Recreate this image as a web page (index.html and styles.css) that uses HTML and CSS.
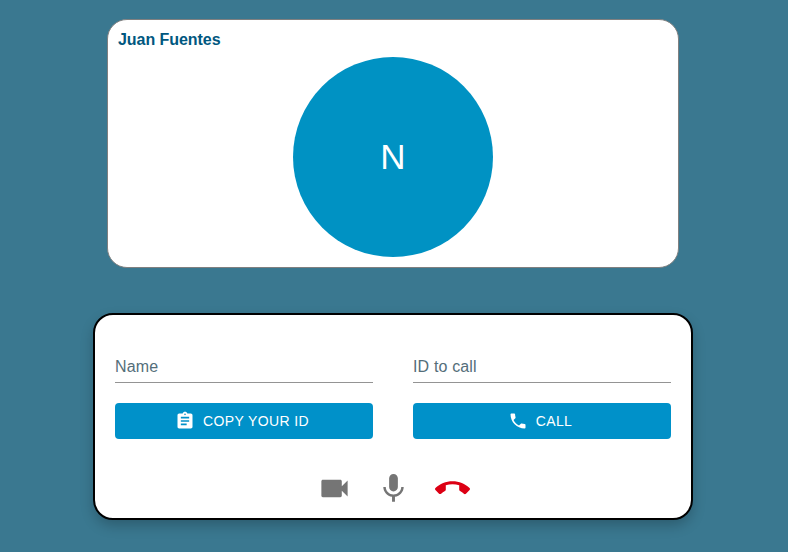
FILE: index.html
```html
<!DOCTYPE html>
<html lang="en">
<head>
<meta charset="utf-8">
<title>Video Chat</title>
<link rel="stylesheet" href="styles.css">
</head>
<body>
<main class="app">
  <section class="video-card">
    <h1 class="caller">Juan Fuentes</h1>
    <div class="avatar">N</div>
  </section>
  <section class="panel">
    <form class="fields">
      <div class="column">
        <div class="field">Name</div>
        <button type="button" class="btn">
          <svg viewBox="0 0 24 24"><path d="M19 3h-4.18C14.4 1.84 13.3 1 12 1c-1.3 0-2.4.84-2.82 2H5c-1.1 0-2 .9-2 2v14c0 1.1.9 2 2 2h14c1.1 0 2-.9 2-2V5c0-1.1-.9-2-2-2zm-7 0c.55 0 1 .45 1 1s-.45 1-1 1-1-.45-1-1 .45-1 1-1zm2 14H7v-2h7v2zm3-4H7v-2h10v2zm0-4H7V7h10v2z"/></svg>
          <span>COPY YOUR ID</span>
        </button>
      </div>
      <div class="column">
        <div class="field">ID to call</div>
        <button type="button" class="btn">
          <svg viewBox="0 0 24 24"><path d="M6.62 10.79c1.44 2.83 3.76 5.14 6.59 6.59l2.2-2.2c.27-.27.67-.36 1.02-.24 1.12.37 2.33.57 3.57.57.55 0 1 .45 1 1V20c0 .55-.45 1-1 1-9.39 0-17-7.61-17-17 0-.55.45-1 1-1h3.5c.55 0 1 .45 1 1 0 1.25.2 2.45.57 3.57.11.35.03.74-.25 1.02l-2.2 2.2z"/></svg>
          <span>CALL</span>
        </button>
      </div>
    </form>
    <div class="controls">
      <button type="button" class="icon-btn"><svg viewBox="0 0 24 24"><path d="M17 10.5V7c0-.55-.45-1-1-1H4c-.55 0-1 .45-1 1v10c0 .55.45 1 1 1h12c.55 0 1-.45 1-1v-3.5l4 4v-11l-4 4z"/></svg></button>
      <button type="button" class="icon-btn"><svg viewBox="0 0 24 24"><path d="M12 14c1.66 0 2.99-1.34 2.99-3L15 5c0-1.66-1.34-3-3-3S9 3.34 9 5v6c0 1.66 1.34 3 3 3zm5.3-3c0 3-2.54 5.1-5.3 5.1S6.7 14 6.7 11H5c0 3.41 2.72 6.23 6 6.72V21h2v-3.28c3.28-.48 6-3.3 6-6.72h-1.7z"/></svg></button>
      <button type="button" class="icon-btn hang-up"><svg viewBox="0 0 24 24"><path d="M12 9c-1.6 0-3.15.25-4.6.72v3.1c0 .39-.23.74-.56.9-.98.49-1.87 1.12-2.66 1.85-.18.18-.43.28-.7.28-.28 0-.53-.11-.71-.29L.29 13.08c-.18-.17-.29-.42-.29-.7 0-.28.11-.53.29-.71C3.34 8.78 7.46 7 12 7s8.66 1.78 11.71 4.67c.18.18.29.43.29.71 0 .28-.11.53-.29.71l-2.48 2.48c-.18.18-.43.29-.71.29-.27 0-.52-.11-.7-.28-.79-.74-1.69-1.36-2.67-1.85-.33-.16-.56-.5-.56-.9v-3.1C15.15 9.25 13.6 9 12 9z"/></svg></button>
    </div>
  </section>
</main>
</body>
</html>
```

FILE: styles.css
```css
* { box-sizing: border-box; }
body {
  margin: 0;
  min-height: 552px;
  background: #3a7890;
  font-family: "Liberation Sans", Arial, sans-serif;
}
.app {
  display: flex;
  flex-direction: column;
  align-items: center;
  gap: 45px;
  width: 786px;
  padding-top: 19px;
}
.video-card {
  display: flex;
  flex-direction: column;
  align-items: center;
  width: 572px;
  height: 249px;
  padding: 10px;
  border: 1px solid #808080;
  border-radius: 20px;
  background: #fff;
}
.caller {
  align-self: flex-start;
  margin: 0;
  font-size: 16px;
  line-height: 20px;
  height: 27px;
  color: #005780;
  letter-spacing: -0.05px;
}
.avatar {
  display: flex;
  align-items: center;
  justify-content: center;
  width: 200px;
  height: 200px;
  border-radius: 50%;
  background: #0092c3;
  color: #fff;
  font-size: 35px;
}
.panel {
  width: 600px;
  height: 207px;
  padding: 37px 20px 0;
  border: 2px solid #000;
  border-radius: 20px;
  background: #fff;
  box-shadow: 0 6px 14px -1px rgba(0,0,0,.24);
}
.fields { display: flex; gap: 40px; margin: 0; }
.column { width: 258px; }
.field {
  height: 31px;
  padding-top: 5px;
  border-bottom: 1px solid #949494;
  color: #546e7a;
  font-size: 16px;
  line-height: 20px;
  letter-spacing: 0.15px;
}
.btn {
  display: flex;
  align-items: center;
  justify-content: center;
  gap: 8px;
  width: 100%;
  height: 36px;
  margin-top: 20px;
  padding: 0 4px 0 0;
  border: 0;
  border-radius: 4px;
  background: #0091c9;
  color: #fff;
  font: 14px "Liberation Sans", Arial, sans-serif;
  letter-spacing: 0.4px;
}
.btn svg { width: 20px; height: 20px; fill: currentColor; }
.controls { display: flex; justify-content: center; margin-top: 20px; }
.icon-btn {
  display: flex;
  padding: 12px;
  border: 0;
  background: none;
  color: #757575;
}
.icon-btn svg { width: 35px; height: 35px; fill: currentColor; }
.hang-up { color: #dc0014; }
```
